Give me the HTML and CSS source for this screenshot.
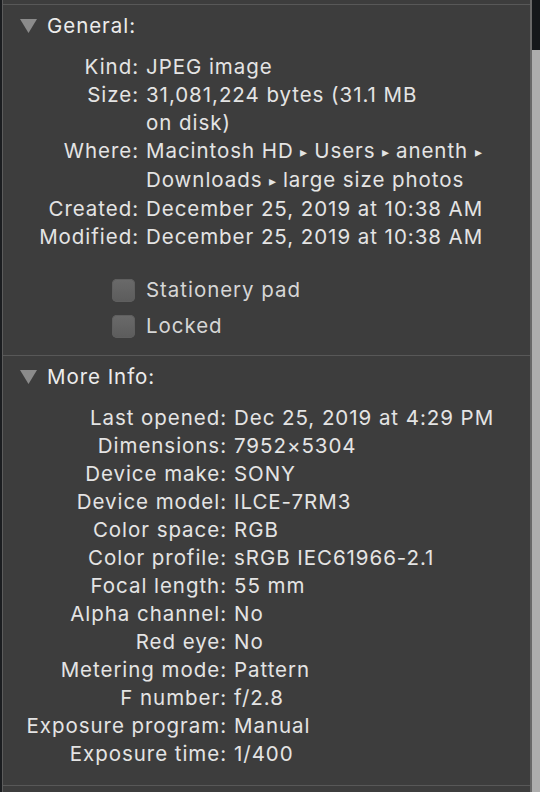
FILE: index.html
```html
<!DOCTYPE html>
<html>
<head>
<meta charset="utf-8">
<link rel="stylesheet" href="styles.css">
</head>
<body>
<div class="edge-left"></div>
<div class="panel">
  <div class="rule"></div>
  <div class="section-head">
    <svg class="disclosure" width="17" height="14" viewBox="0 0 17 14"><polygon points="0,0 17,0 8.5,14" fill="#8b8b8b"/></svg>
    <span>General:</span>
  </div>
  <div class="grid general">
    <div class="label">Kind:</div><div class="value">JPEG image</div>
    <div class="label">Size:</div><div class="value">31,081,224 bytes (31.1 MB<br>on disk)</div>
    <div class="label">Where:</div><div class="value">Macintosh HD <span class="arrow">▸</span> Users <span class="arrow">▸</span> anenth <span class="arrow">▸</span><br>Downloads <span class="arrow">▸</span> large size photos</div>
    <div class="label">Created:</div><div class="value">December 25, 2019 at 10:38 AM</div>
    <div class="label">Modified:</div><div class="value">December 25, 2019 at 10:38 AM</div>
  </div>
  <div class="checks">
    <label class="check"><span class="box"></span><span>Stationery pad</span></label>
    <label class="check"><span class="box"></span><span>Locked</span></label>
  </div>
  <div class="rule"></div>
  <div class="section-head">
    <svg class="disclosure" width="17" height="14" viewBox="0 0 17 14"><polygon points="0,0 17,0 8.5,14" fill="#8b8b8b"/></svg>
    <span>More Info:</span>
  </div>
  <div class="grid more">
    <div class="label">Last opened:</div><div class="value">Dec 25, 2019 at 4:29 PM</div>
    <div class="label">Dimensions:</div><div class="value">7952×5304</div>
    <div class="label">Device make:</div><div class="value">SONY</div>
    <div class="label">Device model:</div><div class="value">ILCE-7RM3</div>
    <div class="label">Color space:</div><div class="value">RGB</div>
    <div class="label">Color profile:</div><div class="value">sRGB IEC61966-2.1</div>
    <div class="label">Focal length:</div><div class="value">55 mm</div>
    <div class="label">Alpha channel:</div><div class="value">No</div>
    <div class="label">Red eye:</div><div class="value">No</div>
    <div class="label">Metering mode:</div><div class="value">Pattern</div>
    <div class="label">F number:</div><div class="value">f/2.8</div>
    <div class="label">Exposure program:</div><div class="value">Manual</div>
    <div class="label">Exposure time:</div><div class="value">1/400</div>
  </div>
  <div class="rule bottom"></div>
</div>
<div class="edge-right">
  <div class="edge-top"></div>
  <div class="edge-rest"></div>
</div>
</body>
</html>
```

FILE: styles.css
```css
* { box-sizing: border-box; }
html, body { margin: 0; padding: 0; }
body {
  display: flex;
  width: 540px;
  height: 792px;
  overflow: hidden;
  background: #1b1d20;
  font-family: Inter, "Liberation Sans", sans-serif;
  font-size: 20.5px;
  letter-spacing: 0.95px;
  color: #e4e4e4;
}
.edge-left { width: 2px; background: #1b1d20; flex: none; }
.panel {
  width: 530px;
  flex: none;
  background: #3d3d3d;
  border-left: 1px solid #5c5c5c;
  border-right: 2px solid #686868;
  padding-top: 4px;
}
.rule { height: 1px; background: #585858; }
.rule.bottom { margin-top: 17px; }
.edge-right { flex: 1; display: flex; flex-direction: column; }
.edge-top { height: 50px; background: #15181b; }
.edge-rest { flex: 1; background: #adadad; }
.section-head {
  height: 42px;
  display: flex;
  align-items: center;
  padding-left: 17px;
  gap: 10px;
  color: #ececec;
  margin-bottom: 6px;
}
.section-head span { position: relative; top: -1px; }
.grid {
  display: grid;
  line-height: 28px;
  column-gap: 7px;
}
.general { grid-template-columns: 136px 1fr; }
.more { grid-template-columns: 224px 1fr; }
.label { text-align: right; }
.arrow { font-size: 14px; vertical-align: 1px; letter-spacing: 0; }
.checks {
  margin-top: 21px;
  margin-bottom: 11px;
  padding-left: 109px;
  display: flex;
  flex-direction: column;
}
.check {
  height: 36px;
  display: flex;
  align-items: center;
  gap: 11px;
  color: #d6d6d6;
}
.check span:last-child { position: relative; top: -1px; }
.box {
  width: 23px;
  height: 23px;
  border-radius: 5px;
  background: linear-gradient(#6a6a6a, #5c5c5c);
  box-shadow: inset 0 0 0 1px #5f5f5f;
}
```
